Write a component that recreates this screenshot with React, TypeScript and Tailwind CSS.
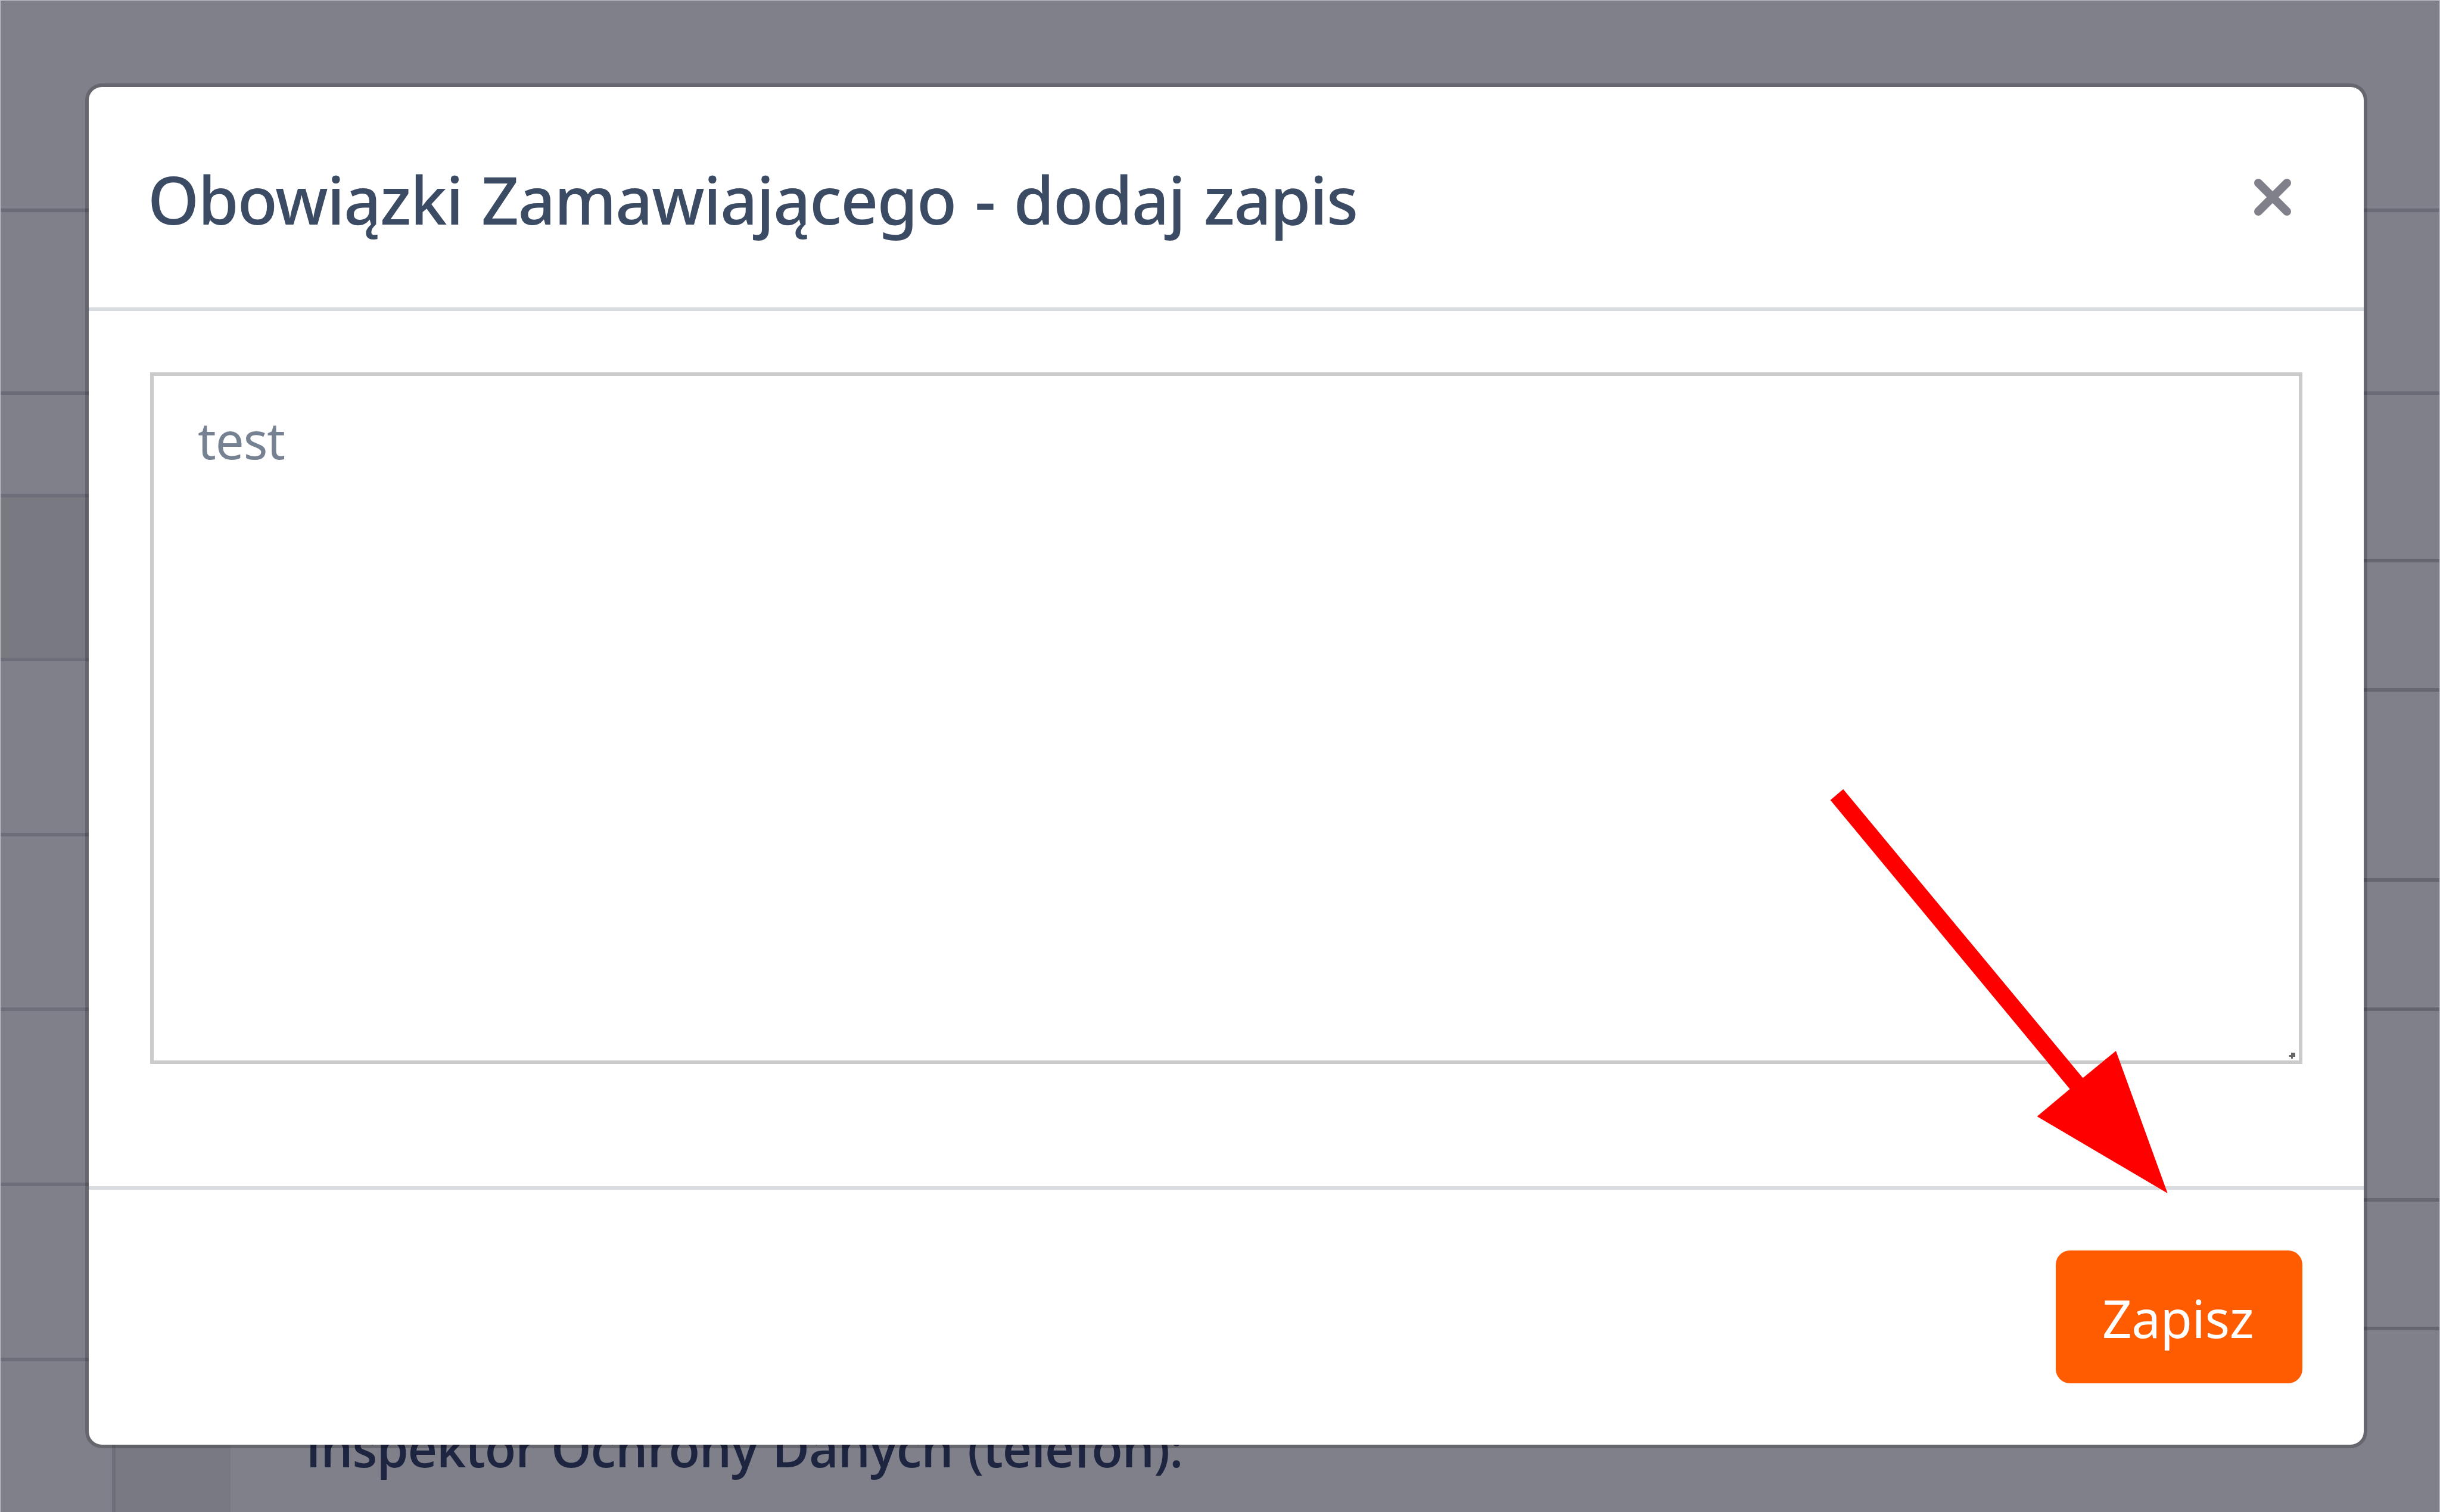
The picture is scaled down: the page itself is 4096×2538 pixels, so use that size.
import { useState } from 'react';
import clsx from 'clsx';

type Row = { height: string; line: string; shaded?: boolean };

const leftRows: Row[] = [
  { height: 'h-[307px]', line: 'border-[#6b6b78]' },
  { height: 'h-[172px]', line: 'border-[#6b6b78]' },
  { height: 'h-[275px]', line: 'border-[#6e6e7a]', shaded: true },
  { height: 'h-[294px]', line: 'border-[#6e6e7a]' },
  { height: 'h-[293px]', line: 'border-[#6e6e7a]' },
  { height: 'h-[294px]', line: 'border-[#6e6e7a]' },
  { height: 'h-[294px]', line: 'border-[#6e6e7a]' },
  { height: 'h-[121px]', line: 'border-[#6e6e7a]' },
];

const rightRows: Row[] = [
  { height: 'h-[307px]', line: 'border-[#6b6b78]' },
  { height: 'h-[281px]', line: 'border-[#6b6b78]' },
  { height: 'h-[217px]', line: 'border-[#666670]' },
  { height: 'h-[319px]', line: 'border-[#666670]' },
  { height: 'h-[217px]', line: 'border-[#666670]' },
  { height: 'h-[320px]', line: 'border-[#666670]' },
  { height: 'h-[216px]', line: 'border-[#666670]' },
  { height: 'h-[173px]', line: 'border-[#666670]' },
];

function TableEdge({ rows }: { rows: Row[] }) {
  return (
    <div className="w-[240px] pt-[349px]">
      {rows.map((row, i) => (
        <div key={i} className={clsx('border-t-6', row.height, row.line, row.shaded && 'bg-[#797982]')} />
      ))}
    </div>
  );
}

// Page content dimmed by the modal backdrop
function Background() {
  return (
    <div className="flex h-full flex-col border-x border-t border-[#c0c4c8] bg-[#80808a]">
      <div className="flex h-[2399px] justify-between">
        <TableEdge rows={leftRows} />
        <TableEdge rows={rightRows} />
      </div>
      <div className="flex h-[138px] pl-[187px]">
        <div className="w-[199px] border-l-6 border-[#6e6e7a] bg-[#797982]" />
        <p className="-mt-[13px] pl-[126px] font-['Open_Sans','Noto_Sans',sans-serif] text-[86px] leading-none font-semibold tracking-[-1.2px] whitespace-nowrap text-[#1e2540] [word-spacing:3px]">
          Inspektor Ochrony Danych (telefon):
        </p>
      </div>
    </div>
  );
}

function CloseIcon() {
  return (
    <svg className="h-16 w-16" viewBox="0 0 64 64" fill="none" stroke="currentColor" strokeWidth={14} strokeLinecap="round">
      <path d="M8 8l48 48M56 8l-48 48" />
    </svg>
  );
}

export default function App() {
  const [value, setValue] = useState('test');

  return (
    <div className="relative h-[2538px] w-[4096px] overflow-hidden font-['Noto_Sans','Open_Sans',sans-serif]">
      <Background />

      <div className="absolute inset-0 px-[143px] pt-[140px]">
        <div role="dialog" className="flex h-[2291px] w-[3831px] flex-col rounded-[28px] border-6 border-black/20 bg-white bg-clip-padding">
          <div className="flex h-[376px] items-center justify-between border-b-6 border-[#d8dce0] pr-[121px] pl-[99px]">
            <h5 className="pt-[5px] text-[110px] leading-none font-medium tracking-[-1.8px] whitespace-nowrap text-[#3c4b64] [word-spacing:5px]">
              Obowiązki Zamawiającego - dodaj zapis
            </h5>
            <button type="button" aria-label="Zamknij" className="text-[#80808a]">
              <CloseIcon />
            </button>
          </div>

          <div className="relative h-[1469px] px-[103px] pt-[103px]">
            <textarea
              value={value}
              onChange={(e) => setValue(e.target.value)}
              className="block h-[1161px] w-full resize-none border-6 border-[#cbcbcb] px-[74px] pt-[65px] text-[85px] leading-none tracking-[-1px] text-[#768192] outline-none"
            />
            {/* resize grip */}
            <svg className="absolute top-[1245px] right-[115px] h-[10px] w-[10px]" viewBox="0 0 10 10" fill="#666">
              <path d="M3 0h7v7H6v3H3V7H0V4h3z" />
            </svg>
          </div>

          <div className="flex flex-1 justify-end border-t-6 border-[#d8dce0] px-[103px] pt-[102px]">
            <button type="button" className="h-[223px] w-[414px] rounded-[24px] bg-[#ff5b00] pt-[3px] pr-[4px] text-[87px] leading-none tracking-[-0.5px] text-white">
              Zapisz
            </button>
          </div>
        </div>
      </div>

      {/* arrow pointing at the save button */}
      <svg className="pointer-events-none absolute top-[1320px] left-[3070px] h-[690px] w-[575px]" viewBox="3070 1320 575 690" fill="#f00">
        <path d="M3094.2 1324.8L3496.5 1809.4L3552 1763.9L3638.7 2003L3419.6 1874L3474.6 1828L3072.6 1342.9Z" />
      </svg>
    </div>
  );
}
